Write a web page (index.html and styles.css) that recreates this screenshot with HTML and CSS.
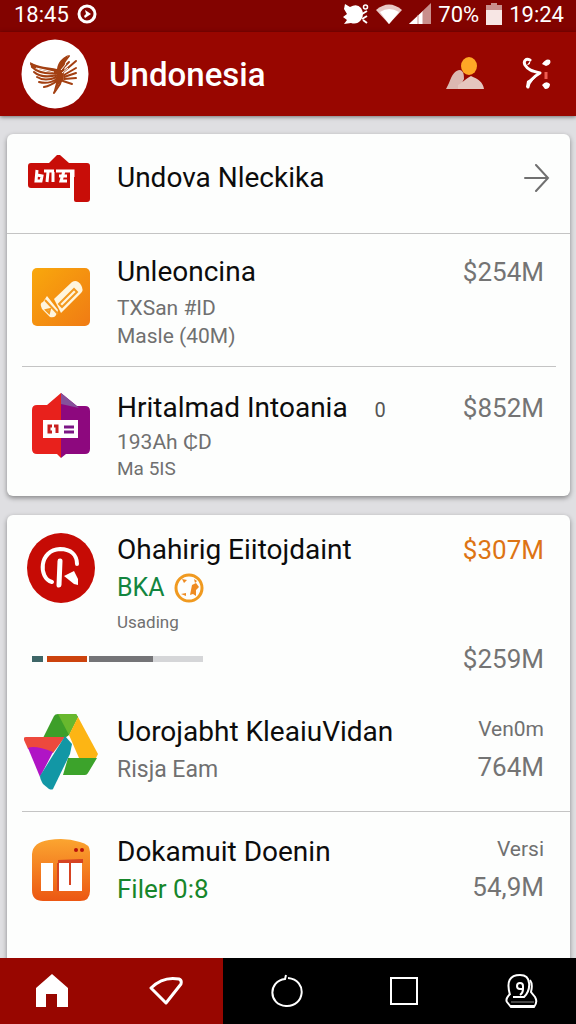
FILE: index.html
```html
<!DOCTYPE html>
<html lang="id">
<head>
  <meta charset="UTF-8" />
  <meta name="viewport" content="width=device-width, initial-scale=1.0"/>
  <title>Undonesia</title>
  <link rel="stylesheet" href="styles.css">
</head>
<body>
  <div class="status-bar">
    <span>18:45</span>
    <svg class="clock" width="20" height="20" viewBox="0 0 20 20">
      <circle cx="10" cy="10" r="8" fill="none" stroke="#fff" stroke-width="3"/>
      <path d="M8 6l6 4-6 4-1-2 2-2z" fill="#fff"/>
    </svg>
    <div class="status-icons">
      <svg width="26" height="24" viewBox="0 0 26 24" fill="#fff">
        <path d="M2 2l5 3q7-4 11 1 4 6 0 12-4 5-10 3l-7 1 3-4-4-3 4-3-3-5z"/>
        <circle cx="22.500" cy="5" r="2" fill="none" stroke="#fff" stroke-width="1.500"/>
        <path d="M19 12l5-3M19 17l5-3M20 18l4 3" stroke="#fff" stroke-width="2" fill="none"/>
      </svg>
      <svg width="26" height="22" viewBox="0 0 26 22">
        <path d="M0 7Q13-4 26 7L13 21z" fill="#e9c9c6"/>
        <path d="M4 9Q13 3 23 9L13 21z" fill="#fff"/>
      </svg>
      <svg width="22" height="22" viewBox="0 0 22 22">
        <path d="M0 21L22 0v21z" fill="#c98f8c"/>
        <path d="M0 21L14 8v13z" fill="#fff"/>
        <path d="M9 12v9M14 8v13" stroke="#c98f8c"/>
      </svg>
      <span>70%</span>
      <svg width="16" height="22" viewBox="0 0 16 22">
        <path d="M5 0h6v2h5v6H0V2h5z" fill="#c98f8c"/>
        <path d="M0 7h16v15H0z" fill="#f7e6e4"/>
      </svg>
      <span>19:24</span>
    </div>
  </div>

  <header class="app-bar">
    <svg class="logo" width="68" height="70" viewBox="0 0 68 70">
      <ellipse cx="34" cy="35" rx="33.500" ry="34.500" fill="#fff"/>
      <g fill="none" stroke="#a34012" stroke-width="2" stroke-linecap="round">
        <path d="M10 25c7 5 17 5 28 7M11 28c7 7 17 7 26 6M13 33c7 6 15 5 23 3M16 38c6 4 13 3 20 0M18 43c7 2 12 1 18-3M23 48c6-1 9-3 13-6" />
        <path d="M37 35l4-9 7-9M40 31l8-8M41 34l14-12M43 36l12-7M43 38l12-4M43 40l12-1M42 42l9 3M41 38l-2 7-6 9"/>
      </g>
      <path d="M9 23c9 5 18 5 27 7 1-7 5-11 11-14l-3 8-2 18-4 3-6 10 3-11 1-9-26-7z" fill="#a34012"/>
      <path d="M15 29l18 4M40 31l5-6M41 34l6-5" stroke="#fff" fill="none"/>
    </svg>
    <h1>Undonesia</h1>
    <button class="icon-button" aria-label="Akun">
      <svg width="38" height="34" viewBox="0 0 38 34">
        <path d="M0 32l3-6c3-8 6-13 11-13 4 1 4 6 4 9l-5 10z" fill="#dcb8b1"/>
        <path d="M12 32v-4c4-2 7-6 13-9 7 3 12 6 13 13z" fill="#e5c6bf"/>
        <ellipse cx="23" cy="9" rx="8" ry="9" fill="#ffa726"/>
      </svg>
    </button>
    <button class="icon-button" aria-label="Menu">
      <svg width="30" height="34" viewBox="0 0 30 34">
        <path d="M8 3C4 1 1 4 3 8c3 5 7 6 15 8-7 4-11 8-12 14" fill="none" stroke="#fff" stroke-width="3" stroke-linejoin="round" stroke-linecap="round"/>
        <path d="M8 4q1 4-3 4zM17 17l-9 9-2 5-2-1 1-6z" fill="#fff"/>
        <path d="M20 7q4-6 8-4 2 4-4 6zM20 28q4-5 8-1 0 5-5 5z" fill="#fff"/>
        <path d="M24 15v7" stroke="#ef5b50" stroke-width="3"/>
      </svg>
    </button>
  </header>

  <main class="content">
    <section class="card">
      <a class="row row-link" href="#">
        <svg class="row-icon" width="66" height="48" viewBox="0 0 66 48">
          <path d="M3 9h18l8-8 3 0 9 8h18q3 0 3 3v33q0 3-3 3H48q-2 0-2-2V16h-4v18H3q-3 0-3-3V12q0-3 3-3z" fill="#c80d08"/>
          <path d="M9 16l-1 11h5l1-5-5-1M16 17h10M20 18l-1 10M25 18v10M28 17h17v6M36 17l-3 10h6M31 22h8" stroke="#fff" stroke-width="3" fill="none"/>
        </svg>
        <h2>Undova Nleckika</h2>
        <svg class="arrow" width="26" height="28" viewBox="0 0 26 28" fill="none" stroke="#707070" stroke-width="2" stroke-linecap="round">
          <path d="M1 14h23M12 1l12 13-12 13"/>
        </svg>
      </a>
      <div class="row row-inset row-first">
        <svg class="row-icon" width="58" height="58" viewBox="0 0 58 58">
          <defs>
            <linearGradient id="amber" x2="1" y2="1"><stop stop-color="#f9a80c"/><stop offset="1" stop-color="#f07b14"/></linearGradient>
          </defs>
          <rect width="58" height="58" rx="5" fill="url(#amber)"/>
          <path d="M22 31l18-17q5-3 9 3 3 5 0 8L29 45z" fill="#fff5dd"/>
          <path d="M27 36l15-15 3 3-15 15z" fill="none" stroke="#f39a20" stroke-width="2"/>
          <path d="M15 28l11 14q-2 9-8 7l-8-8q-3-6 1-7z" fill="#fff5dd"/>
          <path d="M13 32l13 14M14 42l4-1-1 4z" fill="none" stroke="#f39a20" stroke-width="2"/>
        </svg>
        <div class="info">
          <h2>Unleoncina</h2>
          <p class="detail">TXSan #ID</p>
          <p class="detail">Masle (40M)</p>
        </div>
        <div class="amount">$254M</div>
      </div>
      <div class="row row-second">
        <svg class="row-icon" width="58" height="68" viewBox="0 0 58 68">
          <path d="M29 1L15 13H5q-5 0-5 5v39q0 5 5 5h20l4 4z" fill="#e8211c"/>
          <path d="M29 1l16 13h8q5 0 5 5v38q0 5-5 5H34l-5 4z" fill="#8d087e"/>
          <path d="M29 1l18 15-18-4z" fill="#85519b"/>
          <path d="M11 28h35v18H11z" fill="#fff"/>
          <path d="M20 34h-3v6h3M22 34h3v7" fill="none" stroke="#c81e1e" stroke-width="3"/>
          <path d="M32 35h10M32 40h10" stroke="#7b1685" stroke-width="3"/>
        </svg>
        <div class="info">
          <h2>Hritalmad Intoania <span class="count">0</span></h2>
          <p class="detail">193Ah ₵D</p>
          <p class="detail detail-small">Ma 5IS</p>
        </div>
        <div class="amount">$852M</div>
      </div>
    </section>

    <section class="card">
      <div class="row row-usage">
        <svg class="row-icon" width="70" height="72" viewBox="0 0 70 72">
          <ellipse cx="35" cy="36" rx="34" ry="35" fill="#c60b05"/>
          <path d="M26 50C12 46 13 18 34 17c11 0 17 6 17 15" fill="none" stroke="#fff" stroke-width="4" stroke-linecap="round"/>
          <path d="M34 29l-1 24" stroke="#fff" stroke-width="5" stroke-linecap="round"/>
          <path d="M38 44l10-5 4 8v6l-4-1z" fill="#fff"/>
        </svg>
        <div class="info">
          <h2>Ohahirig Eiitojdaint</h2>
          <p class="bank">BKA
            <svg width="30" height="30" viewBox="0 0 30 30">
              <circle cx="15" cy="15" r="13" fill="none" stroke="#f09a20" stroke-width="3"/>
              <path d="M8 6l5 1-3 3zM7 21l5-1v3zM16 22l2-10 4-2 3 4-3 3v6l-3-2zM20 6l3 2-2 2z" fill="#ee8b22"/>
            </svg>
          </p>
          <p class="caption">Usading</p>
        </div>
        <div class="amount amount-orange">$307M</div>
        <div class="usage">
          <span class="bar bar-teal"></span>
          <span class="bar bar-orange"></span>
          <span class="bar bar-gray"></span>
          <span class="bar bar-light"></span>
        </div>
        <div class="amount amount-total">$259M</div>
      </div>
      <div class="row row-app row-divider">
        <svg class="row-icon" width="74" height="76" viewBox="0 0 74 76">
          <path d="M30 2q1-2 4-2h18l2 3-9 18-4 3H19z" fill="#3d9f29"/>
          <path d="M34 0h18l2 3-9 18z" fill="#68b82e"/>
          <path d="M54 3l20 37-2 4H55L45 21z" fill="#fdb514"/>
          <path d="M44 44h29l-9 15q-1 2-3 2H39z" fill="#3ca32b"/>
          <path d="M2 23h39L29 39 4 35 0 26q-1-3 2-3z" fill="#ed493d"/>
          <path d="M4 34q7-3 25 4L16 63z" fill="#b014c5"/>
          <path d="M41 22l7 8-2 10-17 35q-1 1-4 0l-6-5q-3-5-3-8z" fill="#1297a5"/>
        </svg>
        <div class="info">
          <h2>Uorojabht KleaiuVidan</h2>
          <p class="detail detail-large">Risja Eam</p>
        </div>
        <div class="side">
          <p class="side-label">Ven0m</p>
          <p class="amount">764M</p>
        </div>
      </div>
      <div class="row row-app row-last">
        <svg class="row-icon" width="58" height="64" viewBox="0 0 58 64">
          <defs>
            <linearGradient id="orange" x2="0" y2="1"><stop stop-color="#fba530"/><stop offset="1" stop-color="#ec5712"/></linearGradient>
          </defs>
          <path d="M17 2q16-3 31 2 10 2 10 10v39q0 10-10 10H11Q0 63 0 52V16Q1 4 17 2z" fill="url(#orange)"/>
          <path d="M9 25h12v28H9zM27 25h23v28H27z" fill="#fff"/>
          <path d="M26 22l25-1v4H26z" fill="#d64322"/>
          <path d="M38 25v22M26 25v28" stroke="#d64322" stroke-width="2"/>
          <circle cx="44" cy="12" r="2" fill="#b9120b"/>
          <circle cx="50" cy="12" r="2" fill="#b9120b"/>
        </svg>
        <div class="info">
          <h2>Dokamuit Doenin</h2>
          <p class="detail detail-large detail-green">Filer 0:8</p>
        </div>
        <div class="side">
          <p class="side-label">Versi</p>
          <p class="amount">54,9M</p>
        </div>
      </div>
    </section>
  </main>

  <nav class="nav-bar">
    <div class="nav-app">
      <button aria-label="Beranda">
        <svg width="34" height="34" viewBox="0 0 34 34"><path d="M17 0l16 14v19H22V20H11v13H1V14z" fill="#fff"/></svg>
      </button>
      <button aria-label="Penyimpanan">
        <svg width="34" height="30" viewBox="0 0 34 30"><path d="M2 12Q14 0 30 3q3 1 2 5L17 27z" fill="none" stroke="#fff" stroke-width="3" stroke-linejoin="round"/></svg>
      </button>
    </div>
    <div class="nav-system">
      <button aria-label="Muat ulang">
        <svg width="32" height="34" viewBox="0 0 32 34" fill="none" stroke="#fff" stroke-width="2"><path d="M15 1l-1 4C-3 7-3 31 15 32 34 33 37 6 17 4"/></svg>
      </button>
      <button aria-label="Terbaru">
        <svg width="28" height="28" viewBox="0 0 28 28"><rect x="1" y="1" width="26" height="26" fill="none" stroke="#fff" stroke-width="2"/></svg>
      </button>
      <button aria-label="Profil">
        <svg width="34" height="36" viewBox="0 0 34 36" fill="none" stroke="#fff" stroke-width="2">
          <path d="M6 22C2 8 6 2 16 2c12 0 11 15 4 22H9"/>
          <path d="M19 15v-2a3 3 0 1 0-3 3h3q0 4-3 6" stroke-width="2"/>
          <path d="M6 21q-5 5-3 8l4 5h23q4-5 1-10l-4-5q2-8-1-12"/>
          <path d="M7 29h23" stroke="#888" stroke-width="1"/>
          <path d="M6 33h24"/>
        </svg>
      </button>
    </div>
  </nav>
</body>
</html>
```
FILE: styles.css
```css
* {
  box-sizing: border-box;
}

body {
  font-family: Roboto, "Liberation Sans", sans-serif;
  background: #dfdfe2;
  color: #0c0c0c;
  margin: 0;
  height: 100vh;
  display: flex;
  flex-direction: column;
}

h1, h2, p {
  margin: 0;
}

svg {
  display: block;
  flex-shrink: 0;
}

button {
  background: none;
  border: 0;
  padding: 0;
  cursor: pointer;
}

/* Top bars */
.status-bar {
  display: flex;
  align-items: center;
  gap: 8px;
  height: 32px;
  padding: 0 12px 4px 14px;
  background: #820300;
  color: #fff;
  font-size: 22px;
  flex-shrink: 0;
}

.status-icons {
  display: flex;
  align-items: center;
  gap: 7px;
  margin-left: auto;
}

.app-bar {
  display: flex;
  align-items: center;
  height: 84px;
  padding: 0 24px 0 21px;
  background: #980600;
  color: #fff;
  box-shadow: 0 1px 4px rgba(0,0,0,0.5);
  flex-shrink: 0;
  z-index: 1;
}

.app-bar h1 {
  flex: 1;
  margin-left: 20px;
  font-size: 33px;
  font-weight: 500;
}

.icon-button {
  margin-left: 38px;
}

/* Cards */
.content {
  flex: 1;
  min-height: 0;
  overflow: hidden;
  padding: 18px 6px 0 7px;
}

.card {
  background: #fdfefd;
  border-radius: 6px;
  box-shadow: 0 2px 5px rgba(0,0,0,0.4);
  margin-bottom: 19px;
}

.card:last-child {
  min-height: 100%;
}

.row {
  display: grid;
  grid-template-columns: 108px 1fr auto;
  padding-right: 26px;
  position: relative;
}

.row-icon {
  justify-self: center;
}

.row h2 {
  font-size: 28px;
  line-height: 36px;
  font-weight: 400;
  padding-left: 2px;
  white-space: nowrap;
}

.row-link {
  align-items: center;
  height: 100px;
  padding-right: 20px;
  padding-bottom: 12px;
  border-bottom: 1px solid #c4c4c4;
  color: inherit;
  text-decoration: none;
}

.row-first {
  padding-top: 20px;
  padding-bottom: 17px;
}

.row-first .row-icon {
  margin-top: 14px;
}

.row-first h2 {
  margin-bottom: 4px;
}

.row-inset::after,
.row-divider::after {
  content: "";
  position: absolute;
  left: 15px;
  right: 14px;
  bottom: 0;
  border-bottom: 1px solid #c4c4c4;
}

.row-divider::after {
  right: 0;
}

.row-second {
  padding-top: 23px;
  padding-bottom: 14px;
}

.row-second .row-icon {
  margin-top: 2px;
}

.count {
  margin-left: 20px;
  font-size: 20px;
  color: #555;
}

.detail {
  padding-left: 2px;
  font-size: 21px;
  line-height: 28px;
  color: #707070;
}

.detail-small {
  font-size: 19px;
  line-height: 26px;
}

.detail-large {
  font-size: 23px;
  line-height: 40px;
}

.detail-green {
  color: #16862a;
  font-size: 26px;
  line-height: 38px;
}

.amount {
  font-size: 26px;
  line-height: 36px;
  color: #747474;
  text-align: right;
}

.amount-orange {
  color: #dd7414;
}

.row-usage {
  padding-top: 17px;
  padding-bottom: 13px;
}

.bank {
  display: flex;
  align-items: center;
  gap: 9px;
  padding-left: 2px;
  font-size: 25px;
  line-height: 40px;
  color: #12853f;
}

.caption {
  padding-left: 2px;
  font-size: 17px;
  line-height: 28px;
  color: #707070;
}

.usage {
  grid-column: 1 / 3;
  display: flex;
  align-items: center;
  height: 46px;
  padding-left: 25px;
}

.bar {
  height: 6px;
}

.bar-teal {
  width: 11px;
  margin-right: 4px;
  background: #3e6667;
}

.bar-orange {
  width: 40px;
  margin-right: 2px;
  background: #cc430d;
}

.bar-gray {
  width: 64px;
  background: #747477;
}

.bar-light {
  width: 50px;
  background: #d5d6d8;
}

.amount-total {
  line-height: 46px;
}

.row-app {
  padding-top: 19px;
  padding-bottom: 22px;
}

.row-last {
  padding-top: 22px;
}

.row-last .row-icon {
  margin-top: 4px;
}

.side {
  text-align: right;
}

.side-label {
  font-size: 21px;
  line-height: 30px;
  color: #707070;
}

.side .amount {
  line-height: 46px;
}

/* Bottom navigation */
.nav-bar {
  display: grid;
  grid-template-columns: 223fr 353fr;
  height: 66px;
  background: #000;
  flex-shrink: 0;
  z-index: 1;
}

.nav-app,
.nav-system {
  display: flex;
  align-items: center;
  justify-content: space-between;
}

.nav-app {
  padding: 0 40px 0 35px;
  background: #980600;
}

.nav-system {
  padding: 0 38px 0 48px;
}
```
